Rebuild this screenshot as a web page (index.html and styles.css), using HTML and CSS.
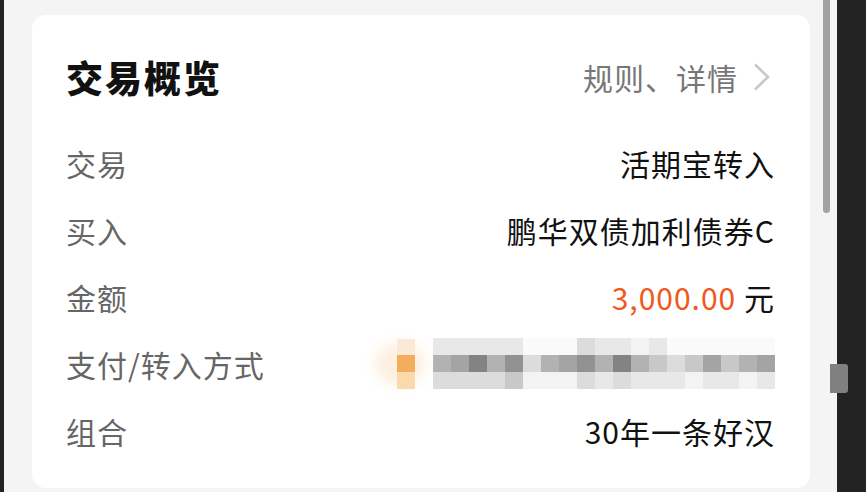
FILE: index.html
```html
<!DOCTYPE html>
<html lang="zh-CN">
<head>
    <meta charset="UTF-8">
    <meta name="viewport" content="width=device-width, initial-scale=1.0">
    <title>交易概览</title>
    <link rel="stylesheet" href="styles.css">
</head>
<body>
    <div class="frame">
        <div class="page">
            <div class="card">
                <div class="card-head">
                    <h1>交易概览</h1>
                    <a class="more">规则、详情
                        <svg class="chev" width="18" height="28" viewBox="0 0 18 28"><path d="M2 1.5 L15 14 L2 26.5" fill="none" stroke="#c8c8c8" stroke-width="2.6"/></svg>
                    </a>
                </div>
                <div class="row"><span class="label">交易</span><span class="value">活期宝转入</span></div>
                <div class="row"><span class="label">买入</span><span class="value">鹏华双债加利债券C</span></div>
                <div class="row"><span class="label">金额</span><span class="value"><span class="money">3,000.00</span> 元</span></div>
                <div class="row">
                    <span class="label">支付/转入方式</span>
                    <div class="blur">
                        <div class="glow"></div>
                        <div class="dot"></div>
                        <div class="pixels">
                            <i class="g2"></i><i class="g2"></i><i class="g2"></i><i class="g2"></i><i class="g2"></i><i class="g0"></i><i class="g0"></i><i class="g0"></i><i class="g3"></i><i class="g2"></i><i class="g2"></i><i class="g1"></i><i class="g2"></i><i class="g0"></i><i class="g0"></i><i class="g0"></i><i class="g0"></i><i class="g0"></i><i class="g0"></i>
                            <i class="m1"></i><i class="m2"></i><i class="m4"></i><i class="m1"></i><i class="m3"></i><i class="g3"></i><i class="m1"></i><i class="m2"></i><i class="m3"></i><i class="m1"></i><i class="m4"></i><i class="m1"></i><i class="m0"></i><i class="g3"></i><i class="m0"></i><i class="m2"></i><i class="m0"></i><i class="m1"></i><i class="m2"></i>
                            <i class="g3"></i><i class="g3"></i><i class="g3"></i><i class="g3"></i><i class="m0"></i><i class="g1"></i><i class="g1"></i><i class="g1"></i><i class="g3"></i><i class="g2"></i><i class="g3"></i><i class="g2"></i><i class="g2"></i><i class="g2"></i><i class="g1"></i><i class="g2"></i><i class="g2"></i><i class="g1"></i><i class="g2"></i>
                        </div>
                    </div>
                </div>
                <div class="row"><span class="label">组合</span><span class="value">30年一条好汉</span></div>
            </div>
            <div class="scrollbar"></div>
        </div>
        <div class="side-tab"></div>
    </div>
</body>
</html>
```

FILE: styles.css
```css
body {
    margin: 0;
    background: #232323;
    font-family: "Noto Sans CJK SC", "Noto Sans", sans-serif;
    overflow: hidden;
}
.frame {
    position: relative;
    height: 492px;
    padding-left: 4px;
}
.page {
    position: relative;
    width: 833px;
    height: 492px;
    background: #f4f4f5;
    padding: 15px 0 0 28px;
    box-sizing: border-box;
}
.card {
    width: 778px;
    height: 473px;
    background: #fff;
    border-radius: 14px;
    padding: 37px 35px 0 34px;
    box-sizing: border-box;
}
.card-head {
    display: flex;
    justify-content: space-between;
    align-items: center;
    height: 50px;
    margin-bottom: 27px;
}
h1 {
    margin: 0;
    font-size: 37px;
    font-weight: 900;
    color: #111;
    letter-spacing: 2px;
}
.more {
    display: flex;
    align-items: center;
    font-size: 30px;
    color: #777;
    letter-spacing: 1px;
    margin-right: 4px;
}
.chev {
    margin-left: 15px;
}
.row {
    display: flex;
    justify-content: space-between;
    align-items: center;
    height: 67px;
    font-size: 30px;
    letter-spacing: 1px;
}
.label {
    color: #666;
}
.value {
    color: #111;
}
.money {
    color: #f2581b;
}
.blur {
    position: relative;
    display: flex;
    align-items: center;
    height: 52px;
}
.glow {
    position: absolute;
    left: -22px;
    top: 4px;
    width: 50px;
    height: 44px;
    border-radius: 50%;
    background: #fdf0e2;
    filter: blur(6px);
}
.dot {
    position: relative;
    width: 18px;
    height: 17px;
    margin-right: 18px;
    background: #f3ad5c;
    box-shadow: 0 -16px 0 #fbe8d6, 0 17px 0 #fad9ab;
}
.pixels {
    display: grid;
    grid-template-columns: repeat(19, 18px);
    grid-auto-rows: 17px;
}
.pixels i {
    display: block;
}
.g0 { background: #fafafa; }
.g1 { background: #f3f3f3; }
.g2 { background: #e8e8e8; }
.g3 { background: #dcdcdc; }
.m0 { background: #c8c8c8; }
.m1 { background: #b2b2b2; }
.m2 { background: #a4a4a4; }
.m3 { background: #929292; }
.m4 { background: #838383; }
.scrollbar {
    position: absolute;
    left: 819px;
    top: 0;
    width: 7px;
    height: 213px;
    background: #a2a2a2;
    border-radius: 0 0 4px 4px;
}
.side-tab {
    position: absolute;
    left: 830px;
    top: 364px;
    width: 18px;
    height: 29px;
    background: #808080;
    border-radius: 0 3px 3px 0;
}
```
